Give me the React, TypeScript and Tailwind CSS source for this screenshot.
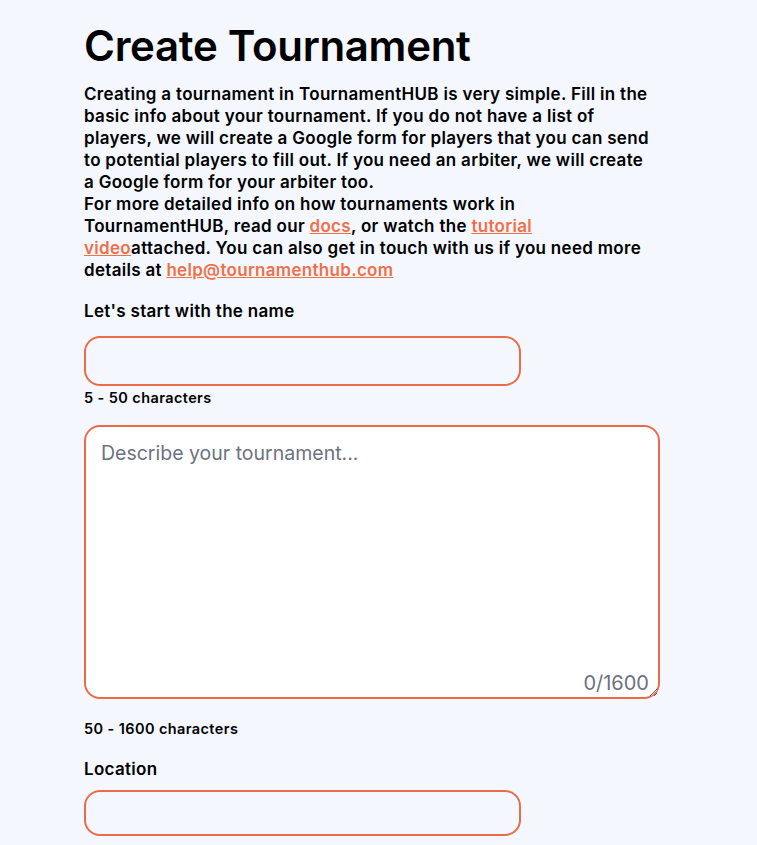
export default function App() {
  return (
    <div className="min-h-[845px] bg-[#f4f7fe] font-['Inter',sans-serif] text-black">
      <div className="ml-[84px] w-[576px] pt-[21px]">
        <h1 className="text-[42px] font-semibold leading-[50px] tracking-[-0.3px]">Create Tournament</h1>
        <p className="mt-[12px] w-[570px] text-[17px] font-semibold leading-[22px] tracking-[0.3px]">
          Creating a tournament in TournamentHUB is very simple. Fill in the basic info about your tournament. If you do
          not have a list of players, we will create a Google form for players that you can send to potential players to
          fill out. If you need an arbiter, we will create a Google form for your arbiter too.
          <br />
          For more detailed info on how tournaments work in TournamentHUB, read our{' '}
          <a href="#" className="text-[#ef7049] underline">
            docs
          </a>
          , or watch the{' '}
          <a href="#" className="text-[#ef7049] underline">
            tutorial video
          </a>
          attached. You can also get in touch with us if you need more details at{' '}
          <a href="#" className="text-[#ef7049] underline">
            help@tournamenthub.com
          </a>
        </p>

        <label className="mt-[19px] block text-[17px] font-semibold leading-[22px] tracking-[0.3px]">
          Let's start with the name
        </label>
        <input
          type="text"
          className="mt-[14px] block h-[50px] w-[437px] rounded-[16px] border-2 border-[#ec6a4a] bg-[#f4f7fe] px-4 outline-none"
        />
        <div className="mt-[2px] text-[14.5px] font-semibold leading-[20px] tracking-[0.4px]">5 - 50 characters</div>

        <div className="relative mt-[17px]">
          <textarea
            placeholder="Describe your tournament..."
            className="block h-[274px] w-[576px] rounded-[16px] border-2 border-[#ec6a4a] bg-white px-[15px] py-[12px] text-[19.5px] leading-[28px] text-black outline-none placeholder:text-[#6b7280]"
          />
          <span className="absolute bottom-[2px] right-[11px] text-[20px] leading-[28px] text-[#6b7280]">0/1600</span>
        </div>
        <div className="mt-[20px] text-[14.5px] font-semibold leading-[20px] tracking-[0.4px]">50 - 1600 characters</div>

        <label className="mt-[19px] block text-[17px] font-semibold leading-[22px] tracking-[0.3px]">Location</label>
        <input
          type="text"
          className="mt-[10px] block h-[46px] w-[437px] rounded-[16px] border-2 border-[#ec6a4a] bg-[#f4f7fe] px-4 outline-none"
        />
      </div>
    </div>
  );
}
